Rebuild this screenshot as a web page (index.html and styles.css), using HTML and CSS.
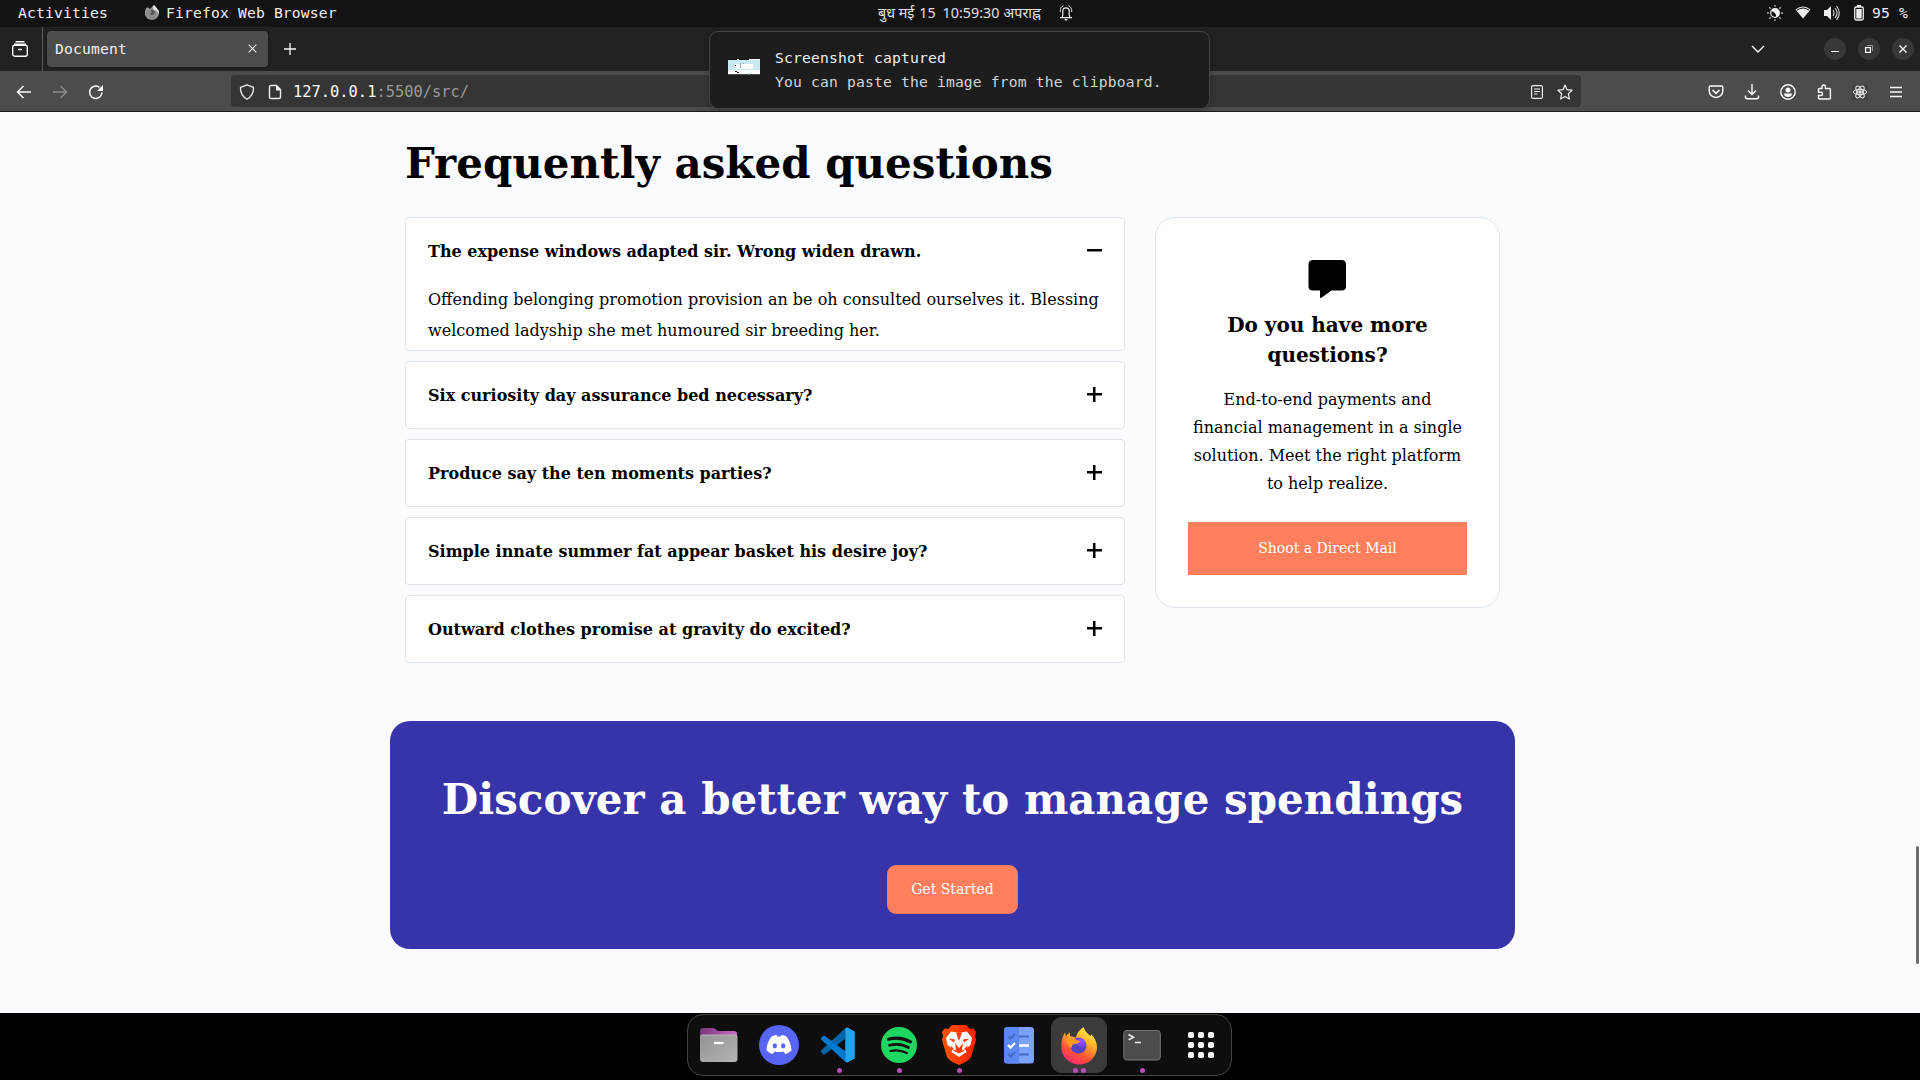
FILE: index.html
```html
<!DOCTYPE html>
<html lang="en">
<head>
<meta charset="utf-8">
<title>Document</title>
<link rel="stylesheet" href="styles.css">
</head>
<body>
<header class="topbar">
  <div class="topbar-left">
    <span class="activities">Activities</span>
    <svg class="app-icon" viewBox="0 0 16 16" width="16" height="16"><path d="M8 2 Q9 0 10 0 Q12 2 13 3.500 Q15 5 15 9 A7.200 7 0 0 1 .8 9 Q.6 5 2.500 2.500 Q5 2 6 4z" fill="#999"/><circle cx="7.500" cy="8" r="3.500" fill="#555"/><path d="M3 5 Q7 4 8 7 Q5 8 7 10 Q11 10 11 6 Q14 9 11 13 Q6 15 2 10z" fill="#8a8a8a"/><path d="M10 0 Q12 2 13 3.500 Q15 5 15 9 Q14 6 10 5 Q8 3 10 0z" fill="#e0e0e0"/></svg>
    <span>Firefox Web Browser</span>
  </div>
  <div class="clock"><span class="hi">बुध मई</span><span class="num">15</span><span class="num time">10:59:30</span><span class="hi">अपराह्न</span>
    <svg class="bell" viewBox="0 0 14 16" width="14" height="16" fill="none" stroke="#eee" stroke-width="1.200"><path d="M1 12.600h12M2.800 12.500q1.200-1.500 1-3.500V6q0-3.200 3.200-3.200T10.200 6v3q-.2 2 1 3.500"/><path d="M1.300 7Q.8 2 4.500.8M12.700 7Q13.200 2 9.500.8" stroke-width=".9"/><path d="M5 14h4l-2 2z" fill="#eee" stroke="none"/></svg>
  </div>
  <div class="status">
    <svg viewBox="0 0 16 16" width="16" height="16"><circle cx="8" cy="8" r="4.300" fill="none" stroke="#eee" stroke-width="1.200"/><path d="M8 3.500a4.500 4.500 0 1 1-3.500 7Q9 10 8 3.500z" transform="rotate(-65 8 8)" fill="#eee"/><path d="M8 0v1.800M8 14.200V16M0 8h1.800M14.200 8H16M2.300 2.300l1.400 1.400M12.300 12.300l1.400 1.400M2.300 13.700l1.400-1.400M12.300 3.700l1.400-1.400" stroke="#bbb" stroke-width="1.300"/></svg>
    <svg class="wifi" viewBox="0 0 16 14" width="16" height="14"><path d="M.5 3.500Q8-2.500 15.500 3.500L8 12.500z" fill="#eee"/><path d="M1.800 4.300Q8-.3 14.200 4.300" fill="none" stroke="#131313" stroke-width="1"/></svg>
    <svg class="volume" viewBox="0 0 16 16" width="16" height="16"><path d="M0 5h3l4-4v14l-4-4H0z" fill="#eee"/><path d="M9 5q2 3 0 6M11 3q4 5 0 10M12.500 1q5.500 7 0 14" fill="none" stroke="#ccc" stroke-width="1.200"/></svg>
    <svg class="battery" viewBox="0 0 10 16" width="10" height="16"><rect x=".7" y="2" width="8.600" height="13" rx="1.500" fill="none" stroke="#eee" stroke-width="1.300"/><path d="M3 0h4v2H3zM2.300 4h5.400v9.500H2.300z" fill="#eee"/></svg>
    <span>95 %</span>
  </div>
</header>

<div class="tabstrip">
  <div class="view-btn"><svg viewBox="0 0 16 16" width="16" height="16" fill="none" stroke="#fbfbfe" stroke-width="1.400"><path d="M3.500.8h9M2 3.200q0 0 1 0h10q1 0 1 0"/><rect x=".7" y="4.200" width="14.600" height="11" rx="2"/><path d="M6 8.500h4"/></svg></div>
  <div class="tab"><span>Document</span><svg viewBox="0 0 10 10" width="9" height="9"><path d="M.7.7l8.600 8.600M9.300.7L.7 9.300" stroke="#eee" stroke-width="1.200"/></svg></div>
  <svg class="plus-tab" viewBox="0 0 12 12" width="12" height="12"><path d="M6 0v12M0 6h12" stroke="#fbfbfe" stroke-width="1.300"/></svg>
  <svg class="chevron" viewBox="0 0 14 8" width="14" height="8"><path d="M1 1l6 6 6-6" fill="none" stroke="#fbfbfe" stroke-width="1.400"/></svg>
  <div class="window-buttons">
    <span class="wbtn"><svg viewBox="0 0 8 8" width="8" height="8"><path d="M0 6.500h8" stroke="#fff"/></svg></span>
    <span class="wbtn"><svg viewBox="0 0 8 8" width="8" height="8" fill="none"><path d="M2 .5h5.500V6" stroke="#999"/><rect x=".6" y="2.600" width="4.800" height="4.800" stroke="#fff" stroke-width="1.200"/></svg></span>
    <span class="wbtn"><svg viewBox="0 0 8 8" width="8" height="8"><path d="M.5.5l7 7M7.500.5l-7 7" stroke="#fff" stroke-width="1.400"/></svg></span>
  </div>
</div>

<div class="toolbar">
  <div class="nav-buttons">
    <svg viewBox="0 0 16 14" width="16" height="14"><path d="M7.500 1L1.500 7l6 6M1.500 7H15" fill="none" stroke="#fbfbfe" stroke-width="1.400"/></svg>
    <svg viewBox="0 0 16 14" width="16" height="14"><path d="M8.500 1l6 6-6 6M14.500 7H1" fill="none" stroke="#8c8c8c" stroke-width="1.400"/></svg>
    <svg viewBox="0 0 16 16" width="16" height="16"><path d="M14 8.500A6.200 6.200 0 1 1 11.500 3.300" fill="none" stroke="#fbfbfe" stroke-width="1.500"/><path d="M15 1v6H9z" fill="#fbfbfe"/></svg>
  </div>
  <div class="urlbar">
    <svg viewBox="0 0 16 16" width="16" height="16"><path d="M8 .8l6.500 2.500q.3 8-6.500 12-6.800-4-6.500-12z" fill="none" stroke="#eee" stroke-width="1.300" stroke-linejoin="round"/></svg>
    <svg class="page-icon" viewBox="0 0 14 16" width="14" height="16"><path d="M3 1.500h5.500l4 4V13q0 1.500-1.500 1.500H3q-1.500 0-1.500-1.500V3q0-1.500 1.500-1.500z" fill="none" stroke="#eee" stroke-width="1.400"/><path d="M8 1v5.500h5z" fill="#eee"/></svg>
    <span class="url"><b>127.0.0.1</b>:5500/src/</span>
    <svg class="reader" viewBox="0 0 12 14" width="12" height="14" fill="none" stroke="#eee" stroke-width="1.200"><rect x=".6" y=".6" width="10.800" height="12.800" rx="1.500"/><path d="M3 4h6M3 6.500h6M3 9h3.500"/></svg>
    <svg class="star" viewBox="0 0 16 16" width="16" height="16"><path d="M8 1l2 4.700 5 .5-3.700 3.500 1.100 5.300L8 12.400 3.600 15l1.100-5.300L1 6.200l5-.5z" fill="none" stroke="#eee" stroke-width="1.200" stroke-linejoin="round"/></svg>
  </div>
  <div class="extensions">
    <svg viewBox="0 0 16 16" width="16" height="16" fill="none" stroke="#fbfbfe" stroke-width="1.400"><path d="M2.500 2h11q1.300 0 1.300 1.300V7a6.800 6.500 0 0 1-13.600 0V3.300Q1.200 2 2.500 2z"/><path d="M4.500 6L8 9.300 11.500 6" stroke-width="1.600"/></svg>
    <svg viewBox="0 0 16 16" width="16" height="16" fill="none" stroke="#fbfbfe" stroke-width="1.400"><path d="M8 0v10M4 6.500l4 4 4-4M1.500 11.500V13q0 1.800 1.800 1.800h9.400q1.800 0 1.800-1.800v-1.500"/></svg>
    <svg viewBox="0 0 16 16" width="16" height="16"><circle cx="8" cy="8" r="7.200" fill="none" stroke="#fbfbfe" stroke-width="1.400"/><circle cx="8" cy="6" r="2.500" fill="#fbfbfe"/><path d="M3.800 9.500h8.400q-.7 3.500-4.200 3.500T3.800 9.500z" fill="#fbfbfe"/></svg>
    <svg viewBox="0 0 16 16" width="16" height="16"><path d="M6 4.500V2.700a1.700 1.700 0 0 1 3.400 0V4.500h4q1 0 1 1V14q0 1-1 1H3.500q-1 0-1-1v-2.500H5a1.500 1.500 0 0 0 0-3.200H2.500V5.500q0-1 1-1z" fill="none" stroke="#fbfbfe" stroke-width="1.400"/></svg>
    <svg viewBox="0 0 16 16" width="16" height="16" fill="none" stroke="#eee"><rect width="16" height="16" fill="#414141" stroke="none"/><ellipse cx="8" cy="8" rx="6.600" ry="2.700"/><ellipse cx="8" cy="8" rx="6.600" ry="2.700" transform="rotate(60 8 8)"/><ellipse cx="8" cy="8" rx="6.600" ry="2.700" transform="rotate(120 8 8)"/><circle cx="8" cy="8" r="1.200" fill="#eee"/></svg>
    <svg viewBox="0 0 16 16" width="16" height="16"><path d="M2 3.500h12M2 8h12M2 12.500h12" stroke="#fbfbfe" stroke-width="1.300"/></svg>
  </div>
</div>

<div class="notification">
  <svg class="thumb" viewBox="0 0 32 16" width="32" height="16"><path d="M0 0h32v16H0z" fill="#fff"/><path d="M0 1h32v10H0z" fill="#c8e8f4"/><path d="M7 5h18v5H7z" fill="#fff"/><path d="M0 0h9v1H0zM11 0h10v1H11zM0 15.300h32v.7H0z" fill="#111"/><path d="M7 6.500h1M7 12.500h2M9 13.500h2" stroke="#123"/><path d="M12.500 4v5M15.500 4v1M20 15h2" stroke="#7aa"/></svg>
  <div class="note-text"><div>Screenshot captured</div><div class="note-body">You can paste the image from the clipboard.</div></div>
</div>

<main class="page">
  <section class="faq">
    <h1>Frequently asked questions</h1>
    <div class="faq-columns">
      <div class="accordion">
        <article class="item open">
          <h2>The expense windows adapted sir. Wrong widen drawn.<i class="toggle minus"></i></h2>
          <p>Offending belonging promotion provision an be oh consulted ourselves it. Blessing welcomed ladyship she met humoured sir breeding her.</p>
        </article>
        <article class="item"><h2>Six curiosity day assurance bed necessary?<i class="toggle"></i></h2></article>
        <article class="item"><h2>Produce say the ten moments parties?<i class="toggle"></i></h2></article>
        <article class="item"><h2>Simple innate summer fat appear basket his desire joy?<i class="toggle"></i></h2></article>
        <article class="item"><h2>Outward clothes promise at gravity do excited?<i class="toggle"></i></h2></article>
      </div>
      <aside class="contact">
        <svg viewBox="0 0 40 40" width="40" height="40"><path d="M5 1h28.500q4.500 0 4.500 4.500v22q0 4-4.500 4H23.500L13 39q-1 .3-1-1v-6.500H5q-4.500 0-4.500-4v-22Q.5 1 5 1z"/></svg>
        <h3>Do you have more questions?</h3>
        <p>End-to-end payments and financial management in a single solution. Meet the right platform to help realize.</p>
        <a class="mail">Shoot a Direct Mail</a>
      </aside>
    </div>
  </section>
  <section class="cta">
    <h1>Discover a better way to manage spendings</h1>
    <a class="start">Get Started</a>
  </section>
  <div class="scroll-thumb"></div>
</main>

<footer class="desktop">
  <nav class="dock">
    <div class="app"><svg viewBox="0 0 40 40" width="40" height="40"><defs><linearGradient id="fp"><stop stop-color="#77387a"/><stop offset="1" stop-color="#c869c4"/></linearGradient><linearGradient id="fg" x2="1" y2="1"><stop stop-color="#929292"/><stop offset="1" stop-color="#b5b5b5"/></linearGradient></defs><path d="M1 9V6q0-3 3-3h10q2 0 3 1.500T20 6h15q3 0 3 3v8H1z" fill="url(#fp)"/><rect x="1" y="10" width="37.500" height="27" rx="3" fill="url(#fg)"/><path d="M1.500 12q0-2 2-2h32.500q2 0 2 2" fill="none" stroke="#c4c4c4" stroke-width=".8"/><path d="M15 18h9.500" stroke="#fff" stroke-width="2.300"/></svg></div>
    <div class="app"><svg viewBox="0 0 40 40" width="40" height="40"><circle cx="20" cy="20" r="20" fill="#5865f2"/><path d="M12.500 11.500q2.500-1.300 5-1.500l1 1.500h3l1-1.500q2.800.2 5 1.500 4.500 6 5 14-2.800 2.500-6.300 3.500l-1.700-2.500q-4.500 1-9 0L13.800 29Q10 28 7.500 25.500 7.500 18 12.500 11.500z" fill="#fff"/><ellipse cx="15.800" cy="20.800" rx="2.200" ry="2.600" fill="#5865f2"/><ellipse cx="24.200" cy="20.800" rx="2.200" ry="2.600" fill="#5865f2"/></svg></div>
    <div class="app"><svg viewBox="0 0 40 40" width="40" height="40"><path d="M26.500 3L35.500 6.500v27L26.500 37z" fill="#24a3f0"/><path d="M26.500 3v10.500L6 29.300q-1 .5-2 0L2 27q-.5-1 .3-1.800z" fill="#0065a9"/><path d="M26.500 37V26.500L6 11q-1-.5-2 0L2 13q-.5 1 .3 1.800z" fill="#007acc"/><path d="M26.500 3l2-.5 7 4v27l-7 4-2-.5z" fill="#24a3f0"/></svg><span class="dots"><i></i></span></div>
    <div class="app"><svg viewBox="0 0 40 40" width="40" height="40"><circle cx="20" cy="20" r="18" fill="#1ed760"/><g fill="none" stroke="#101010" stroke-linecap="round"><path d="M9.500 14.200Q21 11 31.500 16.800" stroke-width="3.200"/><path d="M10.500 20.300Q21 17.500 29.500 22.500" stroke-width="2.700"/><path d="M11.500 26Q20.500 24 27.800 28" stroke-width="2.200"/></g></svg><span class="dots"><i></i></span></div>
    <div class="app"><svg viewBox="0 0 40 40" width="40" height="40"><defs><linearGradient id="br"><stop stop-color="#ff5500"/><stop offset="1" stop-color="#ff2000"/></linearGradient></defs><path d="M13 0h14l4 4 3.500-.5L37 7l-1 4 1 4-5 17q-2 4-12 8Q10 36 8 32L3 15l1-4-1-4 2.500-3.500L9 4z" fill="url(#br)"/><path d="M12 6.500l8 1.500 8-1.500 5 6.500-1.500 7-5 4 1 3-7.500 5-7.500-5 1-3-5-4L7 13z" fill="#fff"/><path d="M9.500 13.500l6.500 1-1 3zM30.500 13.500l-6.500 1 1 3zM17 8l3 8 3-8zM16 18l4 5 4-5-1 7h-6zM11 20l4 4-2 1zM29 20l-4 4 2 1zM14 25.500l6-1.500 6 1.500-6 3z" fill="#ff3c05"/></svg><span class="dots"><i></i></span></div>
    <div class="app"><svg viewBox="0 0 40 40" width="40" height="40"><rect x="5" y="2" width="30" height="36.500" rx="3.500" fill="#7ba1fa"/><path d="M20 2H8.500Q5 2 5 5.500V35q0 3.500 3.500 3.500H20z" fill="#5d87f3"/><g fill="none" stroke-width="2"><path d="M9 11l2.500 2.500L16 9M20 11.500h10M9 29l2.500 2.500L16 27M20 29.500h10" stroke="#426bc6"/><path d="M9 20l2.500 2.500L16 18M20 20.500h10" stroke="#fff" stroke-width="2.300"/></g></svg></div>
    <div class="app active"><svg viewBox="0 0 40 40" width="40" height="40"><defs><linearGradient id="ff" x1=".8" x2=".3" y2="1"><stop stop-color="#fff44f"/><stop offset=".35" stop-color="#ffb62c"/><stop offset=".7" stop-color="#ff5634"/><stop offset="1" stop-color="#f52570"/></linearGradient><radialGradient id="fx" cx=".7" cy=".2"><stop stop-color="#a353ff"/><stop offset="1" stop-color="#5343c5"/></radialGradient></defs><path d="M24.500 2q2 5.500 7 9 1-1 .5-2 6 6 6 13.500A17.800 17.300 0 0 1 2.300 22Q2 13 6 7.500l1 4q1-2.500 4-4v3.500l6 1.500q1-6 7.500-10.500z" fill="url(#ff)"/><circle cx="19.500" cy="20.500" r="8" fill="url(#fx)"/><path d="M7 15q4-3.500 8-2 2 2.500 6 3-1 3-6 3-2.500 1-2.500 4Q8 20 7 15z" fill="#ff9a21"/></svg><span class="dots"><i></i><i></i></span></div>
    <span class="divider"></span>
    <div class="app"><svg viewBox="0 0 40 40" width="40" height="40"><rect x="1.800" y="5.500" width="36.500" height="29.500" rx="3" fill="#4c4c4c" stroke="#777" stroke-width="1"/><path d="M6.500 9.500l5 2.700-5 2.700M13 17.500h6" fill="none" stroke="#eee" stroke-width="1.600"/></svg><span class="dots"><i></i></span></div>
    <div class="app grid"><svg viewBox="0 0 40 40" width="40" height="40" fill="#f4f4f4"><rect x="7" y="7" width="6" height="6" rx="1.700"/><rect x="17" y="7" width="6" height="6" rx="1.700"/><rect x="27" y="7" width="6" height="6" rx="1.700"/><rect x="7" y="17" width="6" height="6" rx="1.700"/><rect x="17" y="17" width="6" height="6" rx="1.700"/><rect x="27" y="17" width="6" height="6" rx="1.700"/><rect x="7" y="27" width="6" height="6" rx="1.700"/><rect x="17" y="27" width="6" height="6" rx="1.700"/><rect x="27" y="27" width="6" height="6" rx="1.700"/></svg></div>
  </nav>
</footer>
</body>
</html>
```
FILE: styles.css
```css
* { box-sizing: border-box; }
body { margin: 0; width: 1920px; height: 1080px; overflow: hidden; background: #000; font-family: "DejaVu Sans Mono", monospace; font-size: 14.67px; letter-spacing: .17px; color: #f0f0f0; }
svg { display: block; flex: none; }
h1, h2, h3, p { margin: 0; }

.topbar { height: 27px; background: #131313; display: grid; grid-template-columns: 1fr auto 1fr; align-items: center; line-height: 25px; padding-bottom: 2px; }
.topbar-left { display: flex; align-items: center; padding-left: 18px; }
.app-icon { margin: 0 6px 0 36px; }
.clock { display: flex; align-items: center; font-family: "Noto Sans", "DejaVu Sans", sans-serif; font-size: 14.3px; letter-spacing: 0; white-space: pre; width: 232px; padding-left: 34px; color: #e0e0e0; }
.num { margin-left: 5px; }
.time { margin-right: 4px; margin-left: 7px; }
.bell { margin-left: 18px; }
.status { display: flex; align-items: center; justify-content: flex-end; padding-right: 12px; }
.wifi { margin-left: 12px; }
.volume { margin-left: 13px; }
.battery { margin: 0 8px 0 14px; }

.tabstrip { height: 44px; background: #222; display: flex; align-items: center; }
.view-btn { width: 43px; height: 44px; padding: 14px 0 0 12px; border-right: 1px solid #5a5a5a; }
.tab { width: 221px; height: 36px; margin-left: 4px; border-radius: 4px; background: #4c4c4c; display: flex; align-items: center; justify-content: space-between; padding: 0 11px 1px 8px; box-shadow: 0 0 3px #111; }
.plus-tab { margin-left: 16px; }
.chevron { margin-left: auto; }
.window-buttons { display: flex; gap: 12px; margin: 0 6px 0 59px; }
.wbtn { width: 22px; height: 22px; border-radius: 50%; background: #383838; display: grid; place-items: center; }

.toolbar { height: 41px; background: #4c4c4c; border-bottom: 1px solid #1b1b1b; display: flex; align-items: center; }
.nav-buttons { display: flex; align-items: center; gap: 20px; padding: 1px 0 0 16px; width: 231px; }
.urlbar { width: 1350px; height: 32px; border-radius: 4px; background: #353535; display: flex; align-items: center; padding: 1px 8px 0; }
.page-icon { margin: 0 11px 0 13px; }
.url { font-size: 15.4px; letter-spacing: 0; color: #9a9a9a; }
.url b { font-weight: normal; color: #fbfbfe; }
.reader { margin-left: auto; }
.star { margin-left: 14px; }
.extensions { display: flex; gap: 20px; margin-left: auto; padding: 1px 16px 0 0; }

.notification { position: absolute; left: 709px; top: 31px; width: 501px; height: 78px; border: 1px solid #444; border-radius: 9px; background: #1d1d1d; display: flex; padding: 14px 0 0 18px; box-shadow: 0 2px 6px rgba(0,0,0,.25); }
.thumb { margin-top: 13px; }
.note-text { margin-left: 15px; line-height: 24px; }
.note-body { color: #d4d4d4; }

.page { position: relative; height: 901px; background: #fafbff; color: #000; font-family: "DejaVu Serif", serif; letter-spacing: 0; padding: 25px 0 0 390px; }
.page h1 { font-size: 42px; line-height: 54px; font-weight: bold; white-space: nowrap; }
.faq { padding-left: 15px; height: 584px; }
.faq-columns { display: flex; align-items: flex-start; gap: 30px; margin-top: 26px; }
.accordion { width: 720px; display: flex; flex-direction: column; gap: 10px; }
.item { height: 68px; border: 1px solid #dde5ea; border-radius: 4px; background: #fff; padding: 0 22px; }
.item.open { height: 134px; }
.item h2 { height: 66px; display: flex; align-items: center; justify-content: space-between; font-size: 16px; }
.item p { font-size: 16px; line-height: 31px; margin: 0 -10px 0 0; }
.toggle { width: 15px; height: 15px; margin-bottom: 1px; background: linear-gradient(#000, #000) center / 15px 2.5px no-repeat, linear-gradient(#000, #000) center / 2.5px 15px no-repeat; }
.toggle.minus { background: linear-gradient(#000, #000) center / 15px 2.5px no-repeat; }
.contact { width: 345px; height: 391px; border: 1px solid #dde5ea; border-radius: 20px; background: #fff; padding: 41px 32px 0; text-align: center; display: flex; flex-direction: column; align-items: center; }
.contact h3 { font-size: 20px; line-height: 30px; margin-top: 11px; }
.contact p { font-size: 16px; line-height: 28px; margin-top: 16px; }
.mail { width: 279px; height: 53px; line-height: 52px; margin-top: 24px; background: #ff7f5c; color: #fff; font-size: 14px; }
.cta { width: 1125px; height: 228px; border-radius: 20px; background: #3734a9; color: #fff; display: flex; flex-direction: column; align-items: center; padding-top: 52px; }
.start { width: 131px; height: 49px; line-height: 48px; margin-top: 38px; border-radius: 9px; background: #ff7f5c; text-align: center; font-size: 14px; }
.scroll-thumb { position: absolute; right: 1px; top: 734px; width: 3px; height: 118px; border-radius: 2px; background: #6d6d6d; }

.desktop { height: 67px; display: flex; justify-content: center; padding-top: 1px; }
.dock { width: 545px; height: 62px; margin-right: 1px; border: 1px solid #444; border-radius: 16px; background: #0e0e0e; display: flex; align-items: center; padding: 0 2px 0 1px; }
.app { position: relative; width: 56px; height: 56px; margin: 0 2px; display: grid; place-items: center; border-radius: 11px; flex: none; }
.app.grid { margin-left: 1px; }
.active { background: #3b3b3b; }
.divider { width: 1px; height: 40px; margin: 0 1px 0 2px; background: #555; }
.dots { position: absolute; left: 0; right: 0; bottom: 0; display: flex; justify-content: center; gap: 3px; }
.dots i { width: 5px; height: 5px; border-radius: 50%; background: #b84fb8; }
```
